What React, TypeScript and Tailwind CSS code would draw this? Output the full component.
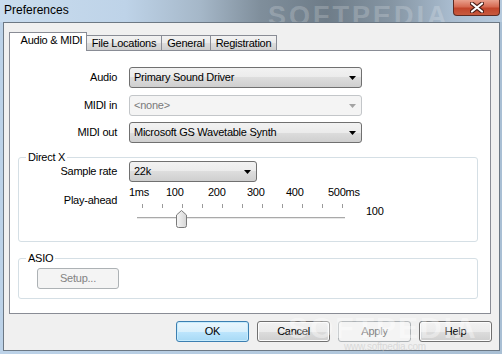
import React from 'react';

// ── Small parts ───────────────────────────────────────────────────────

function Arrow({ disabled }: { disabled?: boolean }) {
  return (
    <svg width="7" height="4" viewBox="0 0 7 4" className="shrink-0">
      <polygon points="0,0 7,0 3.5,4" fill={disabled ? '#a3a3a3' : '#000'} />
    </svg>
  );
}

function Combo({ value, width, disabled }: { value: string; width: string; disabled?: boolean }) {
  return (
    <div
      className={`${width} h-[21px] flex items-center justify-between pl-[4px] pr-[5px] rounded-[3px] border ${
        disabled
          ? 'border-[#c3c6c9] bg-[#f4f4f4] text-[#7a7a7a]'
          : 'border-[#707070] bg-[linear-gradient(#f2f2f2_0%,#ebebeb_50%,#dddddd_50%,#cfcfcf_100%)] text-black'
      }`}
    >
      <span className="leading-none">{value}</span>
      <Arrow disabled={disabled} />
    </div>
  );
}

function Button({ label, kind }: { label: string; kind: 'normal' | 'default' | 'disabled' }) {
  const look =
    kind === 'default'
      ? 'border-[#3c7fb1] bg-[linear-gradient(#eaf6fd_0%,#d9f0fc_50%,#bee6fd_50%,#a7d9f5_100%)] shadow-[inset_0_0_0_1px_#c7ecfd] text-black'
      : kind === 'disabled'
      ? 'border-[#adb2b5] bg-[#f4f4f4] text-[#838383]'
      : 'border-[#707070] bg-[linear-gradient(#f2f2f2_0%,#ebebeb_50%,#dddddd_50%,#cfcfcf_100%)] shadow-[inset_0_0_0_1px_#fcfcfc] text-black';
  return (
    <div className={`w-[73px] h-[21px] flex items-center justify-center rounded-[3px] border ${look}`}>
      {label}
    </div>
  );
}

function GroupBox({ title, className, children }: { title: string; className: string; children: React.ReactNode }) {
  return (
    <div className={`relative ml-[8px] w-[460px] rounded-[3px] border border-[#d5dfe5] ${className}`}>
      <span className="absolute -top-[7px] left-[7px] bg-white px-[2px] leading-[13px]">{title}</span>
      {children}
    </div>
  );
}

// ── Play-ahead slider ─────────────────────────────────────────────────

const TICK_LABELS = [
  { text: '1ms', w: 'w-[37px]' },
  { text: '100', w: 'w-[42px]' },
  { text: '200', w: 'w-[39px]' },
  { text: '300', w: 'w-[39px]' },
  { text: '400', w: 'w-[42px]' },
  { text: '500ms', w: 'w-auto' },
];

function PlayAheadSlider() {
  return (
    <div className="relative w-[220px]">
      <div className="flex h-[12px] leading-[12px] whitespace-nowrap">
        {TICK_LABELS.map((t) => (
          <span key={t.text} className={`${t.w} shrink-0`}>
            {t.text}
          </span>
        ))}
      </div>
      <div className="mt-[6px] pl-[13px] flex gap-[19px] h-[4px]">
        {Array.from({ length: 11 }).map((_, i) => (
          <div key={i} className="w-px h-full shrink-0 bg-[#9a9a9a]" />
        ))}
      </div>
      <div className="mt-[9px] ml-[8px] w-[208px] h-[2px] border-t border-[#a9a9a9] border-b border-b-[#e8e8e8]" />
      {/* thumb */}
      <svg width="11" height="18" viewBox="0 0 11 18" className="absolute left-[47px] top-[24px]">
        <defs>
          <linearGradient id="thumb" x1="0" x2="1" y1="0" y2="0">
            <stop offset="0" stopColor="#f6f6f6" />
            <stop offset="1" stopColor="#d6d6d6" />
          </linearGradient>
        </defs>
        <path
          d="M0.5 5 L5.5 0.5 L10.5 5 L10.5 15.5 Q10.5 17.5 8.5 17.5 L2.5 17.5 Q0.5 17.5 0.5 15.5 Z"
          fill="url(#thumb)"
          stroke="#7a7a7a"
        />
      </svg>
    </div>
  );
}

// ── Preferences dialog ────────────────────────────────────────────────

export default function App() {
  return (
    <div className="relative w-[502px] h-[354px] overflow-hidden bg-[linear-gradient(90deg,#bcd2e8_0%,#b3c9de_60%,#a9bfd4_100%)] font-['Liberation_Sans',Arial,sans-serif] text-[11px] tracking-[-0.25px] text-black">
      {/* Title bar */}
      <div className="relative h-[22px] flex items-start justify-between bg-[linear-gradient(90deg,#c9dcee_0%,#bed3e8_25%,#a5b7c8_40%,#7f8e9b_52%,#6e7c88_65%,#8595a3_78%,#a9bccf_90%,#b6cadd_100%)]">
        <span className="pl-[4px] pt-[3px] text-[12px] leading-[15px] tracking-normal text-black">Preferences</span>
        <span className="absolute left-[268px] -top-[4px] text-[27px] font-bold tracking-[3px] text-white/20">
          SOFTPEDIA
        </span>
        <div className="relative mr-[2px] w-[47px] h-[16px] flex items-center justify-center rounded-b-[4px] border border-t-0 border-[#5d2a22] bg-[linear-gradient(#e9a08d_0%,#d66a52_45%,#c2452b_55%,#c75a3e_100%)]">
          <svg width="14" height="11" viewBox="0 0 14 11">
            <path
              d="M2 1.5 L12 9.5 M12 1.5 L2 9.5"
              stroke="#4a1d16"
              strokeWidth="4.2"
              strokeLinecap="round"
            />
            <path d="M2 1.5 L12 9.5 M12 1.5 L2 9.5" stroke="#ffffff" strokeWidth="2.2" strokeLinecap="round" />
          </svg>
        </div>
      </div>

      {/* Client area */}
      <div className="relative ml-[3px] w-[497px] h-[329px] border border-[#6c7884] bg-[#f0f0f0] flex flex-col">
        <div className="pl-[5px] pt-[9px]">
          {/* Tabs */}
          <div className="relative z-10 flex items-end h-[18px]">
            <div className="w-[78px] h-[19px] mb-[-1px] flex items-center justify-center pl-[7px] pb-[3px] bg-white border border-b-0 border-[#898c95]">
              Audio &amp; MIDI
            </div>
            <div className="w-[75px] h-[15px] flex items-center justify-center border border-l-0 border-b-0 border-[#898c95] bg-[linear-gradient(#f2f2f2_0%,#ebebeb_50%,#dddddd_50%,#cfcfcf_100%)]">
              File Locations
            </div>
            <div className="w-[49px] h-[15px] flex items-center justify-center border border-l-0 border-b-0 border-[#898c95] bg-[linear-gradient(#f2f2f2_0%,#ebebeb_50%,#dddddd_50%,#cfcfcf_100%)]">
              General
            </div>
            <div className="w-[66px] h-[15px] flex items-center justify-center border border-l-0 border-b-0 border-[#898c95] bg-[linear-gradient(#f2f2f2_0%,#ebebeb_50%,#dddddd_50%,#cfcfcf_100%)]">
              Registration
            </div>
          </div>

          {/* Tab panel */}
          <div className="w-[482px] h-[264px] border border-[#898c95] bg-white pt-[16px]">
            <div className="flex items-center h-[21px]">
              <span className="w-[107px] text-right">Audio</span>
              <div className="ml-[12px]">
                <Combo value="Primary Sound Driver" width="w-[233px]" />
              </div>
            </div>
            <div className="mt-[7px] flex items-center h-[21px]">
              <span className="w-[107px] text-right">MIDI in</span>
              <div className="ml-[12px]">
                <Combo value="<none>" width="w-[233px]" disabled />
              </div>
            </div>
            <div className="mt-[6px] flex items-center h-[21px]">
              <span className="w-[107px] text-right">MIDI out</span>
              <div className="ml-[12px]">
                <Combo value="Microsoft GS Wavetable Synth" width="w-[233px]" />
              </div>
            </div>

            <GroupBox title="Direct X" className="mt-[14px] h-[85px] pt-[3px]">
              <div className="flex items-center h-[21px]">
                <span className="w-[98px] text-right">Sample rate</span>
                <div className="ml-[12px]">
                  <Combo value="22k" width="w-[128px]" />
                </div>
              </div>
              <div className="mt-[4px] flex items-start">
                <span className="w-[98px] mt-[8px] text-right leading-[13px]">Play-ahead</span>
                <div className="ml-[12px]">
                  <PlayAheadSlider />
                </div>
                <span className="ml-[17px] mt-[19px] leading-[13px]">100</span>
              </div>
            </GroupBox>

            <GroupBox title="ASIO" className="mt-[16px] h-[41px] pt-[9px] pl-[18px]">
              <div className="w-[82px] h-[21px] flex items-center justify-center rounded-[3px] border border-[#adb2b5] bg-[#f4f4f4] text-[#838383]">
                Setup...
              </div>
            </GroupBox>
          </div>
        </div>

        {/* Dialog buttons */}
        <div className="mt-[7px] flex justify-end gap-[8px] pr-[7px]">
          <Button label="OK" kind="default" />
          <Button label="Cancel" kind="normal" />
          <Button label="Apply" kind="disabled" />
          <Button label="Help" kind="normal" />
        </div>

        {/* watermark */}
        <span className="absolute left-[284px] top-[282px] text-[30px] font-bold tracking-[2px] text-white/40">
          SOFTPEDIA
        </span>
        <span className="absolute left-[340px] top-[316px] text-[10px] text-[#c8c8c8]/60">www.softpedia.com</span>
      </div>
    </div>
  );
}
